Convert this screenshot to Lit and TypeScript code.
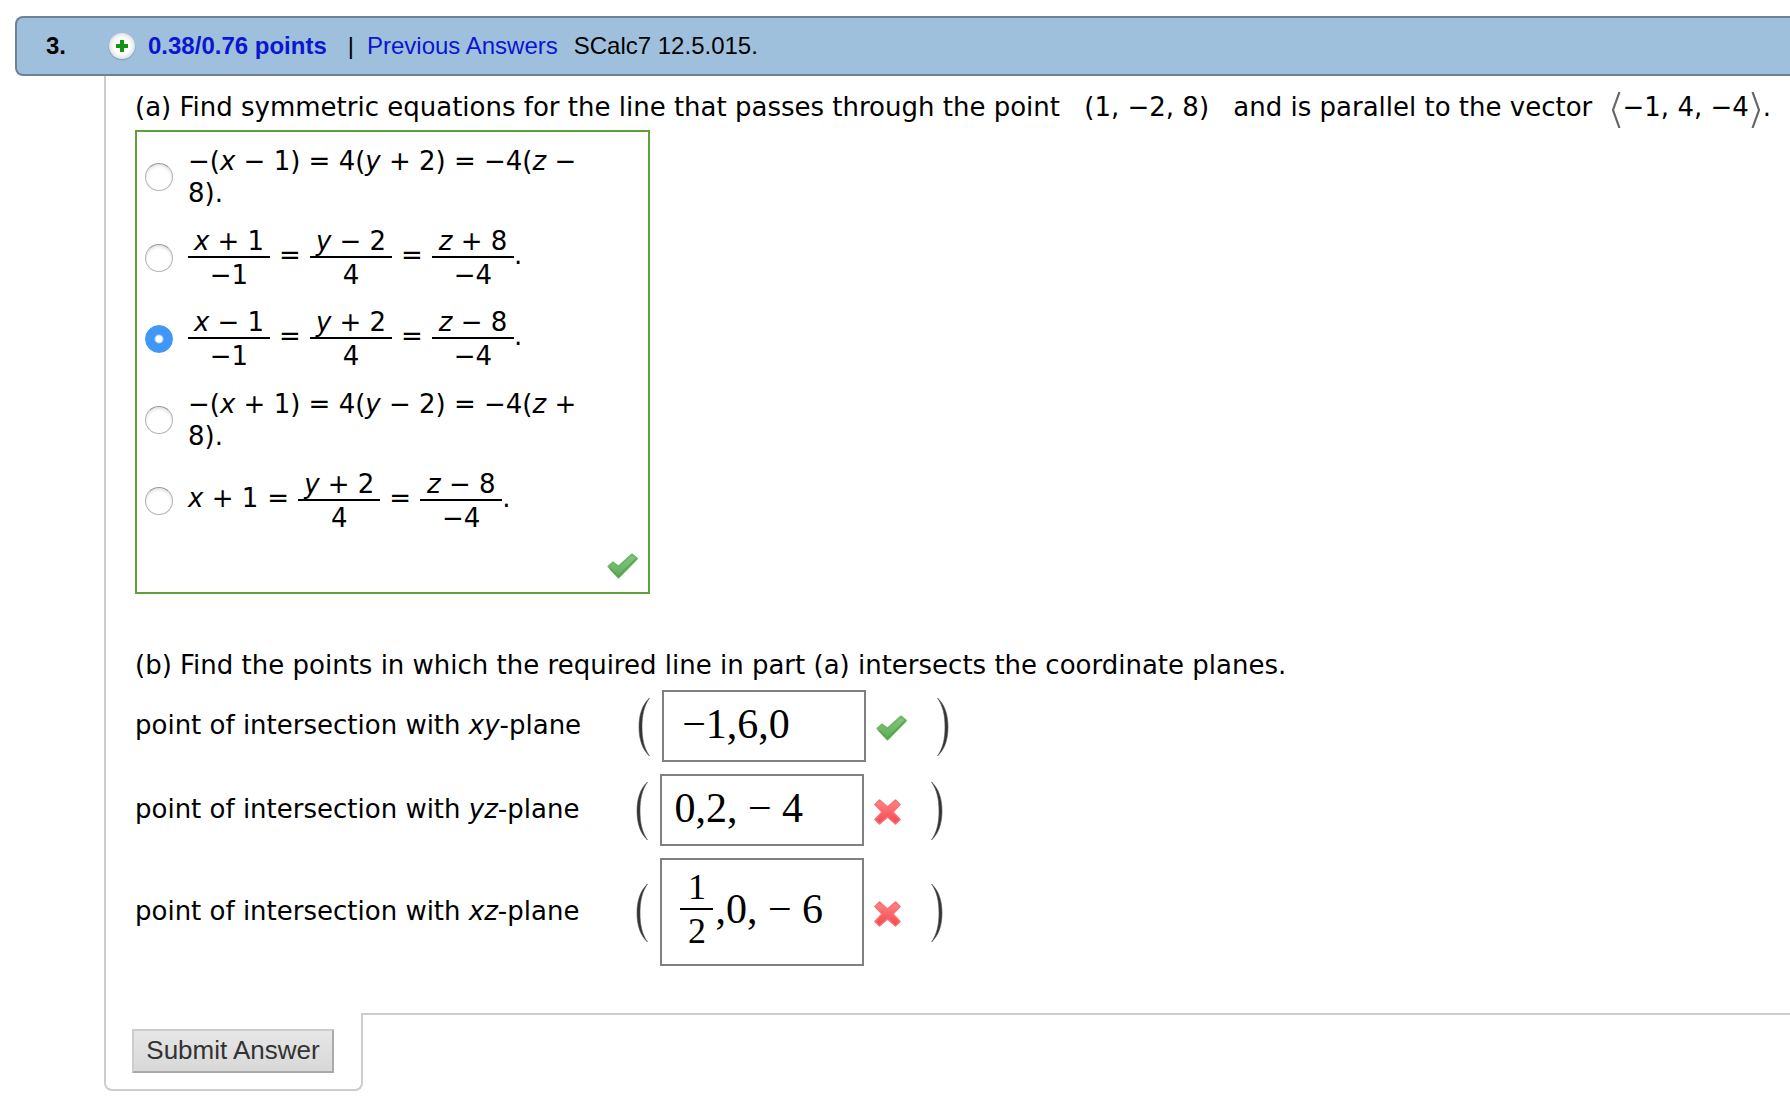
import { LitElement, html, css } from "lit";
import type { TemplateResult } from "lit";
import { customElement, property, state } from "lit/decorators.js";

const leftParen = html`<svg class="paren" width="12" height="60" viewBox="0 0 12 60" aria-hidden="true">
  <path d="M11.5 1C4 8 1 18 1 30S4 52 11.5 59C6 51 4 42 4 30S6 9 11.5 1Z" fill="#333" stroke="#555" stroke-width=".6"/></svg>`;
const rightParen = html`<svg class="paren" width="12" height="60" viewBox="0 0 12 60" aria-hidden="true">
  <path d="M.5 1C8 8 11 18 11 30S8 52 .5 59C6 51 8 42 8 30S6 9 .5 1Z" fill="#333" stroke="#555" stroke-width=".6"/></svg>`;

const frac = (top: unknown, bottom: unknown) => html`<span class="frac"><span class="num">${top}</span><span class="den">${bottom}</span></span>`;
const op = (text: unknown) => html`<span class="op">${text}</span>`;
const x = html`<i>x</i>`;
const y = html`<i>y</i>`;
const z = html`<i>z</i>`;

const options: TemplateResult[] = [
  html`<span>−(${x} − 1) = 4(${y} + 2) = −4(${z} − <span>8).</span></span>`,
  html`<span class="eq">${frac(html`${x} + 1`, "−1")}${op("=")}${frac(html`${y} − 2`, "4")}${op("=")}${frac(html`${z} + 8`, "−4")}<span class="stop">.</span></span>`,
  html`<span class="eq">${frac(html`${x} − 1`, "−1")}${op("=")}${frac(html`${y} + 2`, "4")}${op("=")}${frac(html`${z} − 8`, "−4")}<span class="stop">.</span></span>`,
  html`<span>−(${x} + 1) = 4(${y} − 2) = −4(${z} + <span>8).</span></span>`,
  html`<span class="eq"><span class="term">${x} + 1</span>${op("=")}${frac(html`${y} + 2`, "4")}${op("=")}${frac(html`${z} − 8`, "−4")}<span class="stop">.</span></span>`,
];

@customElement("grade-mark")
export class GradeMark extends LitElement {
  @property({ type: Boolean }) correct = false;
  static styles = css`
    :host { display: block; flex: none; }
    svg { display: block; }
  `;
  render() {
    return this.correct
      ? html`<svg width="31" height="26" viewBox="0 0 31 26" role="img" aria-label="Correct">
          <defs><linearGradient id="g" x1="0" y1="0" x2="0" y2="1"><stop offset="0" stop-color="#86c97f"/><stop offset="1" stop-color="#5cab57"/></linearGradient></defs>
          <path d="M1.5 13.5L6 9.5L11.5 13.5L25 1.5L30 5.5L11.5 24.5Z" fill="url(#g)" stroke="#6fb56a" stroke-width="2" stroke-linejoin="round"/>
          <path d="M3 15.5L11.5 23.5L29 6" fill="none" stroke="#4d9a4a" stroke-width="1.6" opacity=".7"/></svg>`
      : html`<svg width="27" height="28" viewBox="0 0 27 28" role="img" aria-label="Incorrect">
          <defs><linearGradient id="r" x1="0" y1="0" x2="0" y2="1"><stop offset="0" stop-color="#ff8585"/><stop offset="1" stop-color="#f2474f"/></linearGradient></defs>
          <path d="M5.5 2L13.5 9L21.5 2L26 6.5L19 14L26 21.5L21.5 26L13.5 19L5.5 26L1 21.5L8 14L1 6.5Z" fill="url(#r)" stroke="#fa7075" stroke-width="1.6" stroke-linejoin="round"/></svg>`;
  }
}

@customElement("app-root")
export class AppRoot extends LitElement {
  @state() private selected = 2;

  static styles = css`
    :host {
      display: block;
      padding: 16px 0 16px 15px;
      background: #fff;
      color: #000;
      font: 26px/32px "DejaVu Sans", Verdana, sans-serif;
      overflow-x: hidden;
    }
    * { box-sizing: border-box; }
    .header {
      display: flex;
      align-items: center;
      height: 60px;
      padding-left: 29px;
      background: #9fc0dd;
      border: 2px solid #6c8397;
      border-right: 0;
      border-radius: 8px 0 0 8px;
      font: 24px/28px "Liberation Sans", Arial, sans-serif;
      white-space: nowrap;
    }
    .number { width: 62px; font-weight: bold; }
    .expand { flex: none; width: 28px; height: 28px; padding: 0; border: 0; background: none; }
    .expand svg { display: block; overflow: visible; }
    .header a { color: #0b16cf; text-decoration: none; }
    .points { margin-left: 12px; font-weight: bold; }
    .bar { margin: 0 13px 0 21px; }
    .source { margin-left: 16px; }

    .body {
      margin-left: 89px;
      padding: 15px 0 47px 29px;
      border-left: 2px solid #ccc;
    }
    .prompt { margin: 0; white-space: nowrap; }
    .angle { margin: -4px 2px -6px; vertical-align: middle; }
    .coords { margin: 0 16px; }
    .vector { margin-left: 8px; }

    .choices {
      width: 515px;
      margin: 7px 0 55px;
      padding: 13px 10px 13px 8px;
      border: 2px solid #5f9f3c;
    }
    .option {
      display: flex;
      align-items: center;
      gap: 15px;
      margin-bottom: 17px;
      padding-right: 32px;
    }
    .option input {
      appearance: none;
      flex: none;
      width: 28px;
      height: 28px;
      margin: 0;
      border: 1px solid #b4b4b4;
      border-top-color: #999;
      border-radius: 50%;
      background: #fff;
      box-shadow: inset 0 2px 3px #e2e2e2;
    }
    .option input:checked {
      border-color: #3f98f8;
      background: radial-gradient(circle, #fff 0 3px, #3f98f8 5px);
      box-shadow: none;
    }
    .eq { display: flex; align-items: center; }
    .frac { min-width: 82px; text-align: center; line-height: 30px; white-space: nowrap; }
    .num, .den { display: block; }
    .den { padding-top: 2px; border-top: 2px solid #000; }
    .op { width: 40px; text-align: center; padding-bottom: 6px; }
    .term, .stop { padding-bottom: 6px; }
    .feedback { display: flex; justify-content: flex-end; padding-top: 3px; }

    .answers { display: grid; gap: 12px; margin-top: 9px; }
    .answer { display: flex; align-items: center; }
    .label { padding-bottom: 2px; white-space: nowrap; }
    .paren { flex: none; margin-top: 2px; }
    .label + .paren { margin-left: 57px; }
    .field {
      width: 204px;
      height: 72px;
      margin: 0 10px 0 12px;
      padding: 0 8px 4px 18px;
      border: 2px solid #808080;
      border-radius: 0;
      background: #fff;
      color: #000;
      font: 42px/48px "Liberation Serif", "Times New Roman", serif;
    }
    .field.tight { padding-left: 12px; }
    .field.tall { display: flex; align-items: center; height: 108px; padding-bottom: 6px; white-space: pre; }
    .small-frac { width: 33px; margin-right: 2px; text-align: center; font-size: 36px; line-height: 42px; }
    .small-frac .den { padding: 0; }
    .answer grade-mark { margin-top: 4px; }
    grade-mark + .paren { margin-left: 30px; }

    .footer { display: flex; margin-left: 89px; }
    .tab {
      padding: 16px 27px 16px 26px;
      border: 2px solid #ccc;
      border-top: 0;
      border-radius: 0 0 8px 8px;
    }
    .rule { flex: 1; border-top: 2px solid #ccc; }
    .submit {
      display: block;
      width: 202px;
      height: 44px;
      padding: 0 0 2px;
      border: 2px solid #aaa;
      border-top-color: #ccc;
      border-left-color: #ccc;
      border-radius: 0;
      background: linear-gradient(#e6e6e6, #d8d8d8);
      color: #333;
      font: 26px/32px "Liberation Sans", Arial, sans-serif;
      white-space: nowrap;
    }
  `;

  private label(id: string, plane: string) {
    return html`<label class="label" id=${`${id}-label`} for=${id}>point of intersection with <i>${plane}</i>-plane</label>`;
  }

  render() {
    return html`
      <header class="header">
        <span class="number">3.</span>
        <button class="expand" type="button" aria-label="Show point details">
          <svg width="28" height="28" viewBox="0 0 28 28">
            <defs><radialGradient id="disc"><stop offset=".6" stop-color="#fff"/><stop offset="1" stop-color="#e2e2e2"/></radialGradient></defs>
            <circle cx="14" cy="15" r="13.5" fill="#7f95a6" opacity=".6"/>
            <circle cx="14" cy="14" r="13" fill="url(#disc)"/>
            <path d="M12 8h4v4h4v4h-4v4h-4v-4h-4v-4h4Z" fill="#149414"/>
          </svg>
        </button>
        <a class="points" href="#points">0.38/0.76 points</a>
        <span class="bar">|</span>
        <a href="#previous">Previous Answers</a>
        <span class="source">SCalc7 12.5.015.</span>
      </header>

      <main class="body">
        <p class="prompt" id="part-a">(a) Find symmetric equations for the line that passes through the point<span class="coords"> (1, −2, 8) </span>and is parallel to the vector<span class="vector"> <svg class="angle" width="10" height="36" viewBox="0 0 10 36" aria-hidden="true"><path d="M8.5 0L2 18L8.5 36" fill="none" stroke="#666" stroke-width="2.2"/></svg>−1, 4, −4<svg class="angle" width="10" height="36" viewBox="0 0 10 36" aria-hidden="true"><path d="M1.5 0L8 18L1.5 36" fill="none" stroke="#666" stroke-width="2.2"/></svg>.</span></p>

        <div class="choices" role="radiogroup" aria-labelledby="part-a">
          ${options.map((option, i) => html`<label class="option">
            <input type="radio" name="equation" .checked=${this.selected === i} @change=${() => (this.selected = i)}>
            ${option}
          </label>`)}
          <div class="feedback"><grade-mark correct></grade-mark></div>
        </div>

        <p class="prompt">(b) Find the points in which the required line in part (a) intersects the coordinate planes.</p>
        <div class="answers">
          <div class="answer">${this.label("xy", "xy")}${leftParen}
            <input class="field" id="xy" type="text" value="−1,6,0"><grade-mark correct></grade-mark>${rightParen}</div>
          <div class="answer">${this.label("yz", "yz")}${leftParen}
            <input class="field tight" id="yz" type="text" value="0,2, − 4"><grade-mark></grade-mark>${rightParen}</div>
          <div class="answer">${this.label("xz", "xz")}${leftParen}
            <div class="field tall" id="xz" role="textbox" contenteditable="true" aria-labelledby="xz-label"><span class="small-frac"><span class="num">1</span><span class="den">2</span></span><span>,0, − 6</span></div><grade-mark></grade-mark>${rightParen}</div>
        </div>
      </main>

      <footer class="footer">
        <div class="tab"><button class="submit" type="submit">Submit Answer</button></div>
        <div class="rule"></div>
      </footer>
    `;
  }
}
